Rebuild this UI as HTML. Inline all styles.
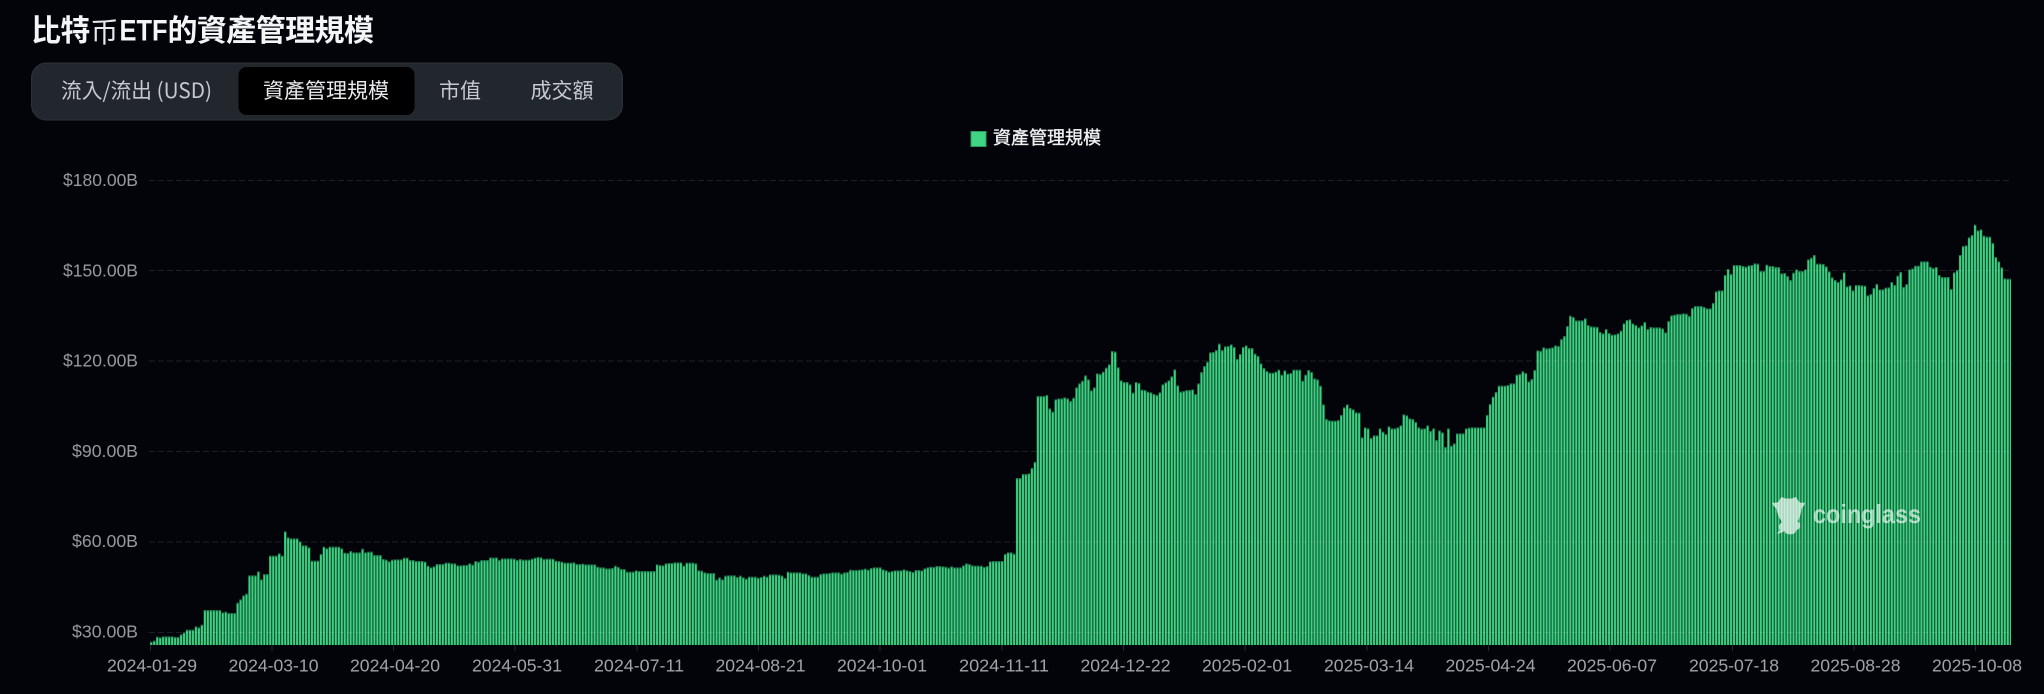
<!DOCTYPE html>
<html><head><meta charset="utf-8"><style>
html,body{margin:0;padding:0;background:#02040a;width:2044px;height:694px;overflow:hidden}
svg{display:block}
text{font-family:"Liberation Sans","Noto Sans CJK TC",sans-serif}
.c{font-family:"Noto Sans CJK TC","Liberation Sans",sans-serif}
.y{font-size:17.5px;fill:#98999e;text-anchor:start}
.x{font-size:17.5px;fill:#a2a3a8;text-anchor:middle}
.t{font-size:21px;fill:#c6c9cd}
</style></head><body>
<svg width="2044" height="694" viewBox="0 0 2044 694" xmlns="http://www.w3.org/2000/svg">
<defs>
<path id="s1" d="M0 375V365h1V362h1V350h1V352h1V349h1V349h1V349h1V349h1V351h1V351h1V343h1V337h1V329h1V329h1V329h1V319h1V322h1V314h1V270h1V270h1V270h1V270h1V270h1V270h1V277h1V275h1V279h1V279h1V279h1V248h1V238h1V226h1V221h1V166h1V166h1V166h1V154h1V178h1V162h1V162h1V107h1V107h1V107h1V100h1V107h1V34h1V52h1V55h1V55h1V55h1V64h1V76h1V76h1V82h1V122h1V122h1V122h1V102h1V80h1V85h1V80h1V80h1V80h1V80h1V85h1V98h1V99h1V93h1V97h1V97h1V97h1V86h1V97h1V95h1V95h1V105h1V105h1V105h1V117h1V119h1V124h1V119h1V118h1V118h1V118h1V113h1V113h1V120h1V120h1V123h1V123h1V123h1V125h1V137h1V142h1V139h1V132h1V132h1V132h1V128h1V128h1V130h1V130h1V136h1V136h1V375Z"/>
<path id="s2" d="M105 315V75h1V75h1V70h1V74h1V63h1V65h1V60h1V60h1V60h1V52h1V53h1V52h1V60h1V55h1V55h1V55h1V55h1V56h1V60h1V57h1V59h1V59h1V59h1V56h1V53h1V51h1V52h1V57h1V56h1V56h1V56h1V62h1V63h1V65h1V68h1V68h1V68h1V67h1V72h1V72h1V71h1V73h1V73h1V73h1V73h1V80h1V82h1V82h1V85h1V85h1V84h1V77h1V81h1V87h1V87h1V95h1V95h1V95h1V91h1V93h1V93h1V93h1V93h1V93h1V93h1V73h1V75h1V76h1V70h1V69h1V69h1V67h1V67h1V67h1V77h1V68h1V68h1V68h1V70h1V91h1V92h1V97h1V99h1V99h1V99h1V119h1V112h1V118h1V107h1V106h1V106h1V106h1V111h1V107h1V112h1V116h1V110h1V110h1V110h1V113h1V111h1V315Z"/>
<path id="s3" d="M206 315V107h1V110h1V103h1V103h1V103h1V104h1V107h1V114h1V95h1V97h1V97h1V97h1V97h1V100h1V100h1V105h1V110h1V110h1V110h1V102h1V100h1V100h1V99h1V97h1V97h1V97h1V101h1V97h1V96h1V89h1V90h1V90h1V89h1V88h1V86h1V89h1V84h1V82h1V82h1V82h1V88h1V91h1V95h1V93h1V91h1V91h1V91h1V88h1V91h1V93h1V96h1V90h1V90h1V91h1V85h1V82h1V80h1V81h1V78h1V78h1V79h1V80h1V83h1V79h1V82h1V82h1V82h1V76h1V70h1V72h1V76h1V77h1V77h1V77h1V81h1V78h1V64h1V63h1V63h1V63h1V63h1V42h1V37h1V37h1V41h1V315Z"/>
<path id="s4" d="M291 945V444h1V444h1V432h1V432h1V430h1V414h1V396h1V198h1V198h1V198h1V195h1V235h1V245h1V208h1V205h1V205h1V202h1V205h1V213h1V203h1V172h1V160h1V152h1V136h1V148h1V181h1V172h1V130h1V132h1V125h1V113h1V103h1V63h1V65h1V112h1V151h1V156h1V156h1V163h1V188h1V156h1V159h1V179h1V180h1V185h1V187h1V192h1V195h1V187h1V163h1V157h1V151h1V139h1V118h1V166h1V185h1V183h1V180h1V180h1V178h1V192h1V160h1V126h1V108h1V95h1V67h1V66h1V60h1V41h1V60h1V49h1V48h1V43h1V51h1V87h1V72h1V51h1V46h1V54h1V54h1V71h1V78h1V100h1V114h1V123h1V128h1V128h1V125h1V119h1V134h1V121h1V131h1V129h1V119h1V119h1V119h1V152h1V134h1V120h1V126h1V145h1V148h1V167h1V223h1V267h1V271h1V272h1V272h1V270h1V255h1V232h1V223h1V234h1V238h1V247h1V248h1V322h1V292h1V295h1V324h1V316h1V316h1V295h1V305h1V312h1V289h1V295h1V295h1V292h1V286h1V253h1V256h1V265h1V267h1V276h1V292h1V296h1V295h1V286h1V303h1V295h1V330h1V301h1V307h1V351h1V295h1V347h1V340h1V310h1V310h1V310h1V295h1V293h1V292h1V292h1V292h1V292h1V292h1V945Z"/>
<path id="s5" d="M449 1215V525h1V492h1V470h1V456h1V437h1V437h1V437h1V435h1V430h1V430h1V404h1V402h1V394h1V399h1V424h1V417h1V390h1V331h1V333h1V322h1V325h1V324h1V322h1V316h1V318h1V297h1V288h1V258h1V227h1V231h1V241h1V241h1V241h1V235h1V255h1V259h1V260h1V261h1V276h1V280h1V267h1V279h1V284h1V283h1V280h1V272h1V250h1V240h1V238h1V250h1V255h1V262h1V256h1V246h1V267h1V261h1V262h1V262h1V262h1V265h1V277h1V243h1V226h1V224h1V222h1V222h1V220h1V221h1V228h1V204h1V198h1V198h1V198h1V201h1V205h1V205h1V189h1V154h1V151h1V151h1V105h1V87h1V102h1V75h1V75h1V75h1V78h1V80h1V76h1V1215Z"/>
<path id="s6" d="M538 1275V135h1V130h1V131h1V153h1V153h1V134h1V138h1V138h1V141h1V141h1V160h1V159h1V168h1V180h1V158h1V148h1V153h1V153h1V148h1V118h1V113h1V105h1V131h1V131h1V132h1V139h1V154h1V172h1V180h1V186h1V178h1V157h1V199h1V196h1V211h1V195h1V195h1V196h1V197h1V226h1V222h1V204h1V192h1V208h1V208h1V203h1V202h1V186h1V195h1V167h1V156h1V201h1V192h1V148h1V145h1V137h1V137h1V124h1V124h1V124h1V140h1V144h1V141h1V165h1V171h1V171h1V171h1V207h1V157h1V150h1V105h1V78h1V76h1V52h1V45h1V14h1V31h1V28h1V47h1V50h1V50h1V69h1V111h1V124h1V142h1V175h1V176h1V176h1V1275Z"/>
<clipPath id="a">
<use href="#s1" transform="translate(150,520) scale(2.975,.33333)"/>
<use href="#s2" transform="translate(150,540) scale(2.975,.33333)"/>
<use href="#s3" transform="translate(150,540) scale(2.975,.33333)"/>
<use href="#s4" transform="translate(150,330) scale(2.975,.33333)"/>
<use href="#s5" transform="translate(150,240) scale(2.975,.33333)"/>
<use href="#s6" transform="translate(150,220) scale(2.975,.33333)"/>
</clipPath>
<clipPath id="b">
<use href="#s1" transform="translate(150,521.2) scale(2.975,.33333)"/>
<use href="#s2" transform="translate(150,541.2) scale(2.975,.33333)"/>
<use href="#s3" transform="translate(150,541.2) scale(2.975,.33333)"/>
<use href="#s4" transform="translate(150,331.2) scale(2.975,.33333)"/>
<use href="#s5" transform="translate(150,241.2) scale(2.975,.33333)"/>
<use href="#s6" transform="translate(150,221.2) scale(2.975,.33333)"/>
</clipPath>
<path id="l1" d="M151.3 200V645"/>
<g id="l5"><use href="#l1"/><use href="#l1" x="2.975"/><use href="#l1" x="5.95"/><use href="#l1" x="8.925"/><use href="#l1" x="11.9"/></g>
<g id="l25"><use href="#l5"/><use href="#l5" x="14.875"/><use href="#l5" x="29.75"/><use href="#l5" x="44.625"/><use href="#l5" x="59.5"/></g>
<g id="l125"><use href="#l25"/><use href="#l25" x="74.375"/><use href="#l25" x="148.75"/><use href="#l25" x="223.125"/><use href="#l25" x="297.5"/></g>
<g id="l625"><use href="#l125"/><use href="#l125" x="371.875"/><use href="#l125" x="743.75"/><use href="#l125" x="1115.625"/><use href="#l125" x="1487.5"/></g>
<clipPath id="edge"><rect x="150" y="190" width="1861" height="455"/></clipPath>
</defs>

<rect width="2044" height="694" fill="#02040a"/>

<!-- title -->
<text x="31" y="41" class="c" font-size="30" font-weight="700" fill="#f4f5f7" letter-spacing="-.6">比特</text>
<text x="90.500" y="42" font-size="28" font-weight="400" fill="#e8e9ec" style="font-family:'Noto Sans CJK SC',sans-serif">币</text>
<text x="119.500" y="40.500" font-size="30" font-weight="700" fill="#f4f5f7" textLength="48" lengthAdjust="spacingAndGlyphs">ETF</text>
<text x="167.500" y="41" class="c" font-size="30" font-weight="700" fill="#f4f5f7" letter-spacing="-.6">的資產管理規模</text>

<!-- tabs -->
<rect x="31.5" y="63" width="591" height="57" rx="15" fill="#22262d" stroke="#2d3239" stroke-width="1"/>
<rect x="238.5" y="67" width="176" height="48" rx="8" fill="#000"/>
<text x="61" y="98" class="t c" textLength="151" lengthAdjust="spacingAndGlyphs">流入/流出 (USD)</text>
<text x="263" y="98" class="t c" style="fill:#e9eaec">資產管理規模</text>
<text x="439" y="98" class="t c">市值</text>
<text x="530.500" y="98" class="t c">成交額</text>

<!-- legend -->
<rect x="971" y="131.5" width="15" height="15" fill="#3fd585" stroke="#2a9a5e" stroke-width="1"/>
<text x="993" y="144" class="c" font-size="18" font-weight="400" fill="#f0f1f2" stroke="#f0f1f2" stroke-width=".35">資產管理規模</text>

<!-- y labels -->
<text x="63" y="186" class="y" textLength="75" lengthAdjust="spacingAndGlyphs">$180.00B</text>
<text x="63" y="276.500" class="y" textLength="75" lengthAdjust="spacingAndGlyphs">$150.00B</text>
<text x="63" y="366.500" class="y" textLength="75" lengthAdjust="spacingAndGlyphs">$120.00B</text>
<text x="72" y="457" class="y" textLength="66" lengthAdjust="spacingAndGlyphs">$90.00B</text>
<text x="72" y="547" class="y" textLength="66" lengthAdjust="spacingAndGlyphs">$60.00B</text>
<text x="72" y="637.500" class="y" textLength="66" lengthAdjust="spacingAndGlyphs">$30.00B</text>

<!-- bars -->
<g clip-path="url(#edge)">
<g clip-path="url(#a)"><g fill="none" stroke="#1f7a4b" stroke-width="2.6"><use href="#l625"/><use href="#l1" x="1859.4"/></g></g>
<g clip-path="url(#b)"><g fill="none" stroke="#3dd282" stroke-width="1.75"><use href="#l625"/><use href="#l1" x="1859.4"/></g></g>
</g>

<!-- grid -->
<g stroke="#ffffff" stroke-opacity=".11" stroke-width="1" stroke-dasharray="6 3">
<path d="M149 180.500H2011M149 270.500H2011M149 361H2011M149 451.500H2011M149 542H2011M149 632.500H2011"/>
</g>

<!-- ticks -->
<path d="M150.500 645v6M272 645v6M393.500 645v6M515 645v6M637 645v6M758.500 645v6M880 645v6M1002 645v6M1123.500 645v6M1245 645v6M1367 645v6M1488.500 645v6M1610 645v6M1732.500 645v6M1854 645v6M1975.500 645v6" stroke="#ffffff" stroke-opacity=".14"/>

<!-- x labels -->
<text x="152" y="671.500" class="x" textLength="90" lengthAdjust="spacingAndGlyphs">2024-01-29</text>
<text x="273.500" y="671.500" class="x" textLength="90" lengthAdjust="spacingAndGlyphs">2024-03-10</text>
<text x="395" y="671.500" class="x" textLength="90" lengthAdjust="spacingAndGlyphs">2024-04-20</text>
<text x="517" y="671.500" class="x" textLength="90" lengthAdjust="spacingAndGlyphs">2024-05-31</text>
<text x="639" y="671.500" class="x" textLength="90" lengthAdjust="spacingAndGlyphs">2024-07-11</text>
<text x="760.500" y="671.500" class="x" textLength="90" lengthAdjust="spacingAndGlyphs">2024-08-21</text>
<text x="882" y="671.500" class="x" textLength="90" lengthAdjust="spacingAndGlyphs">2024-10-01</text>
<text x="1004" y="671.500" class="x" textLength="90" lengthAdjust="spacingAndGlyphs">2024-11-11</text>
<text x="1125.500" y="671.500" class="x" textLength="90" lengthAdjust="spacingAndGlyphs">2024-12-22</text>
<text x="1247" y="671.500" class="x" textLength="90" lengthAdjust="spacingAndGlyphs">2025-02-01</text>
<text x="1369" y="671.500" class="x" textLength="90" lengthAdjust="spacingAndGlyphs">2025-03-14</text>
<text x="1490.500" y="671.500" class="x" textLength="90" lengthAdjust="spacingAndGlyphs">2025-04-24</text>
<text x="1612" y="671.500" class="x" textLength="90" lengthAdjust="spacingAndGlyphs">2025-06-07</text>
<text x="1734" y="671.500" class="x" textLength="90" lengthAdjust="spacingAndGlyphs">2025-07-18</text>
<text x="1855.500" y="671.500" class="x" textLength="90" lengthAdjust="spacingAndGlyphs">2025-08-28</text>
<text x="1977" y="671.500" class="x" textLength="90" lengthAdjust="spacingAndGlyphs">2025-10-08</text>

<!-- watermark -->
<path d="M1772 502.500Q1776 503.500 1779 501.500Q1780 498 1782 497L1785 498.500H1792L1795.500 497Q1797.500 498.500 1798.500 501.500Q1801 503.500 1805 502.500Q1804 506.500 1801.500 508.500Q1801 516 1797.500 521.500Q1801 523 1800 527Q1799 529.500 1796.500 530L1794.500 533.500Q1790 535 1786 533.500L1784.500 531Q1781 533.500 1777 533.500L1780 530Q1777 526 1782 522Q1777 515 1776.500 508.500Q1773.500 506.500 1772 502.500Z" fill="#fff" fill-opacity=".68"/>
<text x="1813" y="523" font-size="26" font-weight="700" fill="#fff" fill-opacity=".62" textLength="108" lengthAdjust="spacingAndGlyphs">coinglass</text>
</svg>
</body></html>
